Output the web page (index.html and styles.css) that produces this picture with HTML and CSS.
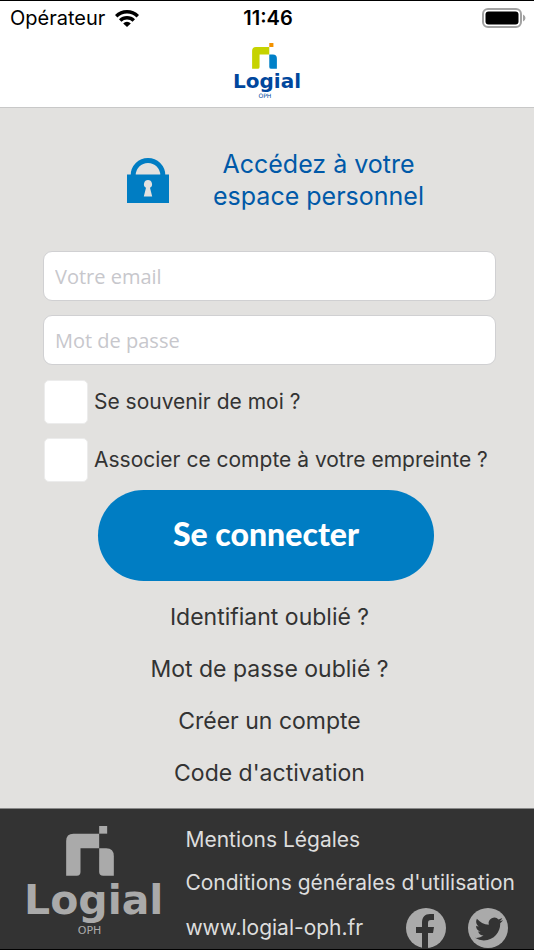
FILE: index.html
```html
<!DOCTYPE html>
<html lang="fr">
<head>
<meta charset="utf-8">
<meta name="viewport" content="width=device-width, initial-scale=1">
<title>Logial OPH</title>
<link rel="stylesheet" href="styles.css">
</head>
<body>
<div class="status">
  <div class="carrier">Opérateur
    <svg width="24" height="17" viewBox="0 0 24 17" aria-hidden="true">
      <g fill="none" stroke="#000" stroke-width="3.400"><path d="M1.200 6.200a15.300 15.300 0 0 1 21.600 0"/><path d="M5.200 10.500a9.600 9.600 0 0 1 13.600 0"/></g>
      <path d="M12 17l-3.800-3.600a5.400 5.400 0 0 1 7.600 0z"/>
    </svg>
  </div>
  <div class="clock">11:46</div>
  <div class="battery">
    <svg width="44" height="20" viewBox="0 0 44 20" aria-hidden="true">
      <rect x="1" y="1" width="38" height="18" rx="5" fill="none" stroke="#a2a2a2" stroke-width="2"/>
      <rect x="3.500" y="3.500" width="33" height="13" rx="3"/>
      <path d="M41 6.500q2.500 1 2.500 3.500t-2.500 3.500z" fill="#a2a2a2"/>
    </svg>
  </div>
</div>
<header class="header">
  <div class="logo logo-small">
    <svg class="mark" viewBox="0 0 143 150" aria-hidden="true">
      <path class="arch" d="M0 149V45Q0 23 22 23H99V67H43V138Q43 149 32 149Z"/>
      <path class="leg" d="M99 67H120Q143 67 143 91V149H111Q99 149 99 138Z"/>
      <path class="dot" d="M99 0h24v23H99z"/>
    </svg>
    <span class="name">Logial</span>
    <span class="sub">OPH</span>
  </div>
</header>
<main class="main">
  <div class="intro">
    <svg class="lock" viewBox="0 0 42 45" aria-hidden="true">
      <path d="M6.200 18V17.300a14.800 14.800 0 0 1 29.600 0V18" fill="none" stroke="#007dc3" stroke-width="5"/>
      <path d="M0 16.500h42V45H0z" fill="#007dc3"/>
      <path d="M21 22a4.200 4.200 0 0 1 2 7.800L25.200 38.500h-8.400L19 29.800a4.200 4.200 0 0 1 2-7.800z" fill="#e2e1df"/>
    </svg>
    <h1 class="title">Accédez à votre<br>espace personnel</h1>
  </div>
  <form class="form">
    <input class="field" type="email" aria-label="Votre email" placeholder="Votre email">
    <input class="field" type="password" aria-label="Mot de passe" placeholder="Mot de passe">
    <div class="checks">
      <label class="check"><input type="checkbox">Se souvenir de moi ?</label>
      <label class="check"><input type="checkbox">Associer ce compte à votre empreinte ?</label>
    </div>
    <button class="submit" type="button">Se connecter</button>
  </form>
  <nav class="links">
    <a href="#">Identifiant oublié ?</a>
    <a href="#">Mot de passe oublié ?</a>
    <a href="#">Créer un compte</a>
    <a href="#">Code d'activation</a>
  </nav>
</main>
<footer class="footer">
  <div class="logo logo-large">
    <svg class="mark" viewBox="0 0 143 150" aria-hidden="true">
      <path d="M0 149V45Q0 23 22 23H99V67H43V138Q43 149 32 149Z"/>
      <path d="M99 67H120Q143 67 143 91V149H111Q99 149 99 138Z"/>
      <path d="M99 0h24v23H99z"/>
    </svg>
    <span class="name">Logial</span>
    <span class="sub">OPH</span>
  </div>
  <div class="legal">
    <a href="#">Mentions Légales</a>
    <a href="#">Conditions générales d'utilisation</a>
    <div class="site">
      <a href="#">www.logial-oph.fr</a>
      <div class="social">
        <a href="#" aria-label="Facebook"><svg width="40" height="40" viewBox="0 0 40 40" aria-hidden="true">
          <circle cx="20" cy="20" r="20" fill="#aaa"/>
          <path d="M16 40V25h-6v-6h6v-4c0-6 3-9 8-9h4v6h-3c-2.200 0-3 1-3 3v4h6l-1 6h-5v15z" fill="#333"/>
        </svg></a>
        <a href="#" aria-label="Twitter"><svg width="40" height="40" viewBox="0 0 40 40" aria-hidden="true">
          <circle cx="20" cy="20" r="20" fill="#aaa"/>
          <path transform="translate(7 7) scale(1.170)" fill="#333" d="M23.950 4.570a10 10 0 0 1-2.820.770 4.960 4.960 0 0 0 2.160-2.720c-.950.550-2 .950-3.130 1.180a4.920 4.920 0 0 0-8.380 4.480C7.690 8.090 4.070 6.130 1.640 3.160a4.820 4.820 0 0 0-.670 2.480c0 1.710.870 3.210 2.190 4.100a4.900 4.900 0 0 1-2.230-.620v.060a4.920 4.920 0 0 0 3.950 4.830 5 5 0 0 1-2.210.080 4.940 4.940 0 0 0 4.600 3.420A9.870 9.870 0 0 1 0 19.540a14 14 0 0 0 7.550 2.210c9.050 0 14-7.500 14-13.980 0-.210 0-.420-.020-.630a9.940 9.940 0 0 0 2.460-2.550z"/>
        </svg></a>
      </div>
    </div>
  </div>
</footer>
</body>
</html>
```
FILE: styles.css
```css
* { box-sizing: border-box; }

body {
  margin: 0;
  min-height: 100vh;
  display: flex;
  flex-direction: column;
  border-top: 1px solid #000;
  border-bottom: 1px solid #000;
  background: #e2e1df;
  color: #333;
  font: 21px/28px Inter, "Liberation Sans", sans-serif;
}

a { color: inherit; text-decoration: none; }
svg { display: block; flex: none; }

.status {
  display: grid;
  grid-template-columns: 1fr auto 1fr;
  align-items: center;
  height: 34px;
  padding: 0 8px 0 10px;
  background: #fff;
  color: #000;
  font-size: 20px;
}
.carrier { display: flex; align-items: center; gap: 10px; }
.clock { font-weight: 600; }
.battery { justify-self: end; }

.header {
  display: flex;
  justify-content: center;
  padding: 8px 0;
  background: #fff;
  border-bottom: 1px solid #c8c8c8;
}

.logo {
  display: flex;
  flex-direction: column;
  align-items: center;
  font-family: "DejaVu Sans", sans-serif;
}
.logo .mark, .logo .sub { margin-right: 6%; }
.logo .name { font-weight: 700; }
.logo-small { color: #00479d; }
.logo-small .mark { width: 25px; height: 26px; }
.logo-small .name { font-size: 20px; line-height: 24px; }
.logo-small .sub { font-size: 6px; line-height: 6px; }
.arch { fill: #c6d300; }
.leg { fill: #0080c8; }
.dot { fill: #f39200; }

.main {
  flex: 1;
  padding: 40px 38px 20px 43px;
}

.intro {
  display: flex;
  justify-content: center;
  align-items: center;
  gap: 44px;
  padding-left: 12px;
}
.lock { width: 42px; height: 45px; }
.title {
  margin: 0;
  color: #0059a8;
  font-size: 25px;
  font-weight: 400;
  line-height: 32px;
  text-align: center;
}

.form {
  display: flex;
  flex-direction: column;
  gap: 14px;
  margin-top: 39px;
}
.field {
  width: 100%;
  height: 50px;
  padding: 0 11px;
  border: 1px solid #d0d0d2;
  border-radius: 9px;
  background: #fff;
  color: #333;
  font: 20px "Open Sans", sans-serif;
}
.field::placeholder { color: #c7c7cc; opacity: 1; }

.checks {
  display: flex;
  flex-direction: column;
  gap: 14px;
  padding: 1px 0 0 1px;
}
.check {
  display: flex;
  align-items: center;
  gap: 6px;
  white-space: nowrap;
}
.check input {
  appearance: none;
  flex: none;
  width: 44px;
  height: 44px;
  margin: 0;
  border: 1px solid #ececec;
  border-radius: 5px;
  background: #fff;
}
.check input:checked { background: #007dc3; }

.submit {
  align-self: center;
  width: 74%;
  height: 91px;
  margin: -6px 7px 0 0;
  padding: 0 0 4px;
  border: 0;
  border-radius: 46px;
  background: #007dc3;
  color: #fff;
  font: 900 32px Lato, sans-serif;
}

.links {
  display: flex;
  flex-direction: column;
  align-items: center;
  gap: 24px;
  margin-top: 22px;
  font-size: 23px;
}

.footer {
  display: flex;
  gap: 22px;
  padding: 17px 14px 1px 24px;
  border-top: 1px solid #888;
  background: #333;
  color: #ddd;
}
.logo-large { color: #aaa; fill: #aaa; }
.logo-large .mark { width: 48px; height: 50px; }
.logo-large .name { font-size: 41px; line-height: 48px; }
.logo-large .sub { font-size: 11px; line-height: 14px; }

.legal {
  flex: 1;
  display: grid;
  grid-template-rows: 43px 39px 40px;
  white-space: nowrap;
}
.site, .social { display: flex; align-items: center; }
.site { justify-content: space-between; padding-right: 12px; }
.social { gap: 22px; }
```
